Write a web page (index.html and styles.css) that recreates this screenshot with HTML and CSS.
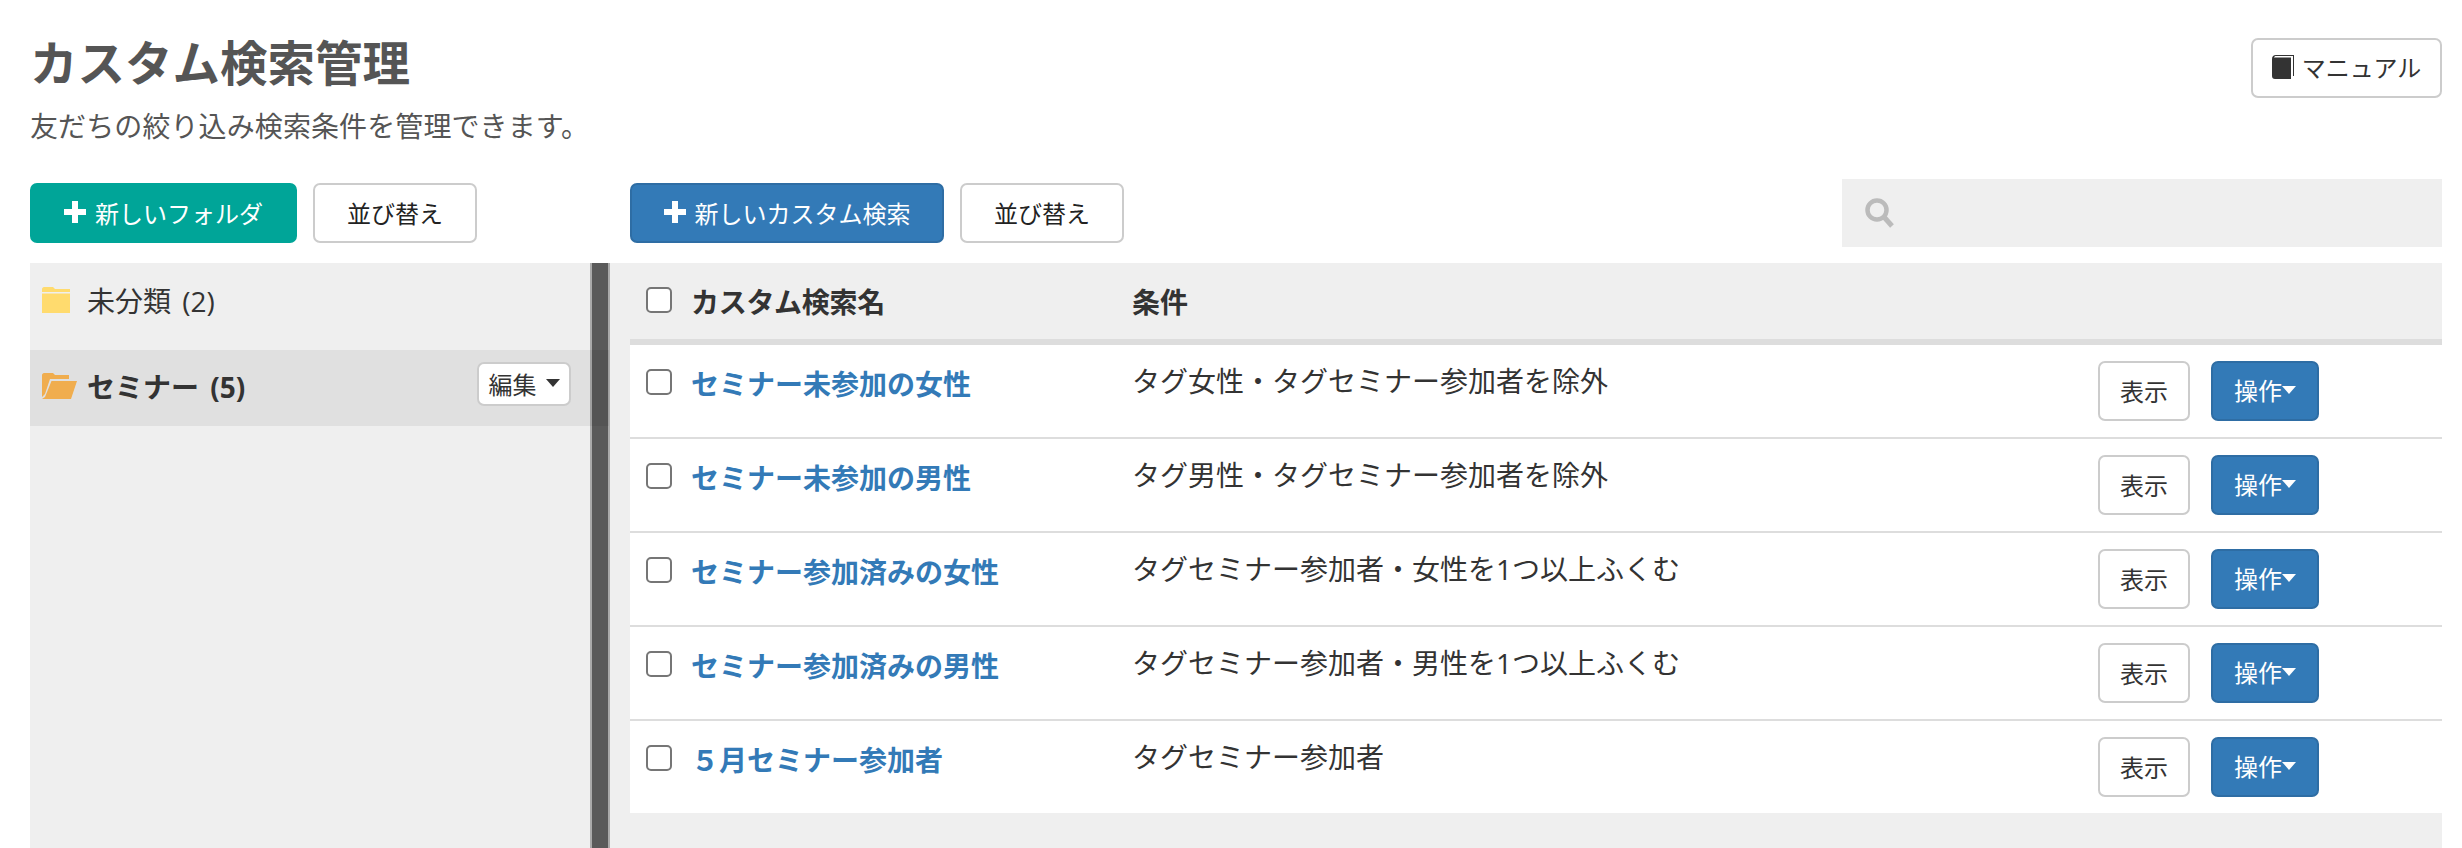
FILE: index.html
```html
<!DOCTYPE html>
<html lang="ja">
<head>
  <meta charset="UTF-8">
  <title>カスタム検索管理</title>
  <link rel="stylesheet" href="styles.css">
</head>
<body>
  <header class="page-header">
    <div>
      <h1>カスタム検索管理</h1>
      <p>友だちの絞り込み検索条件を管理できます。</p>
    </div>
    <button class="btn btn-manual">
      <svg class="icon-book" viewBox="0 0 22 24"><path d="M0 4C0 1.500 1.500 0 4 0h18v21h-1V1H4C3 1 2.300 1.500 2 2.500h17V24H3c-2 0-3-1-3-3z" fill="#333"/></svg>
      マニュアル
    </button>
  </header>

  <div class="toolbar">
    <div class="toolbar-left">
      <button class="btn btn-green btn-wide"><svg class="icon-plus" viewBox="0 0 22 22"><path d="M8 0h6v8h8v6h-8v8H8v-8H0V8h8z" fill="#fff"/></svg>新しいフォルダ</button>
      <button class="btn btn-wide">並び替え</button>
    </div>
    <div class="toolbar-right">
      <button class="btn btn-blue btn-wide btn-new-search"><svg class="icon-plus" viewBox="0 0 22 22"><path d="M8 0h6v8h8v6h-8v8H8v-8H0V8h8z" fill="#fff"/></svg>新しいカスタム検索</button>
      <button class="btn btn-wide">並び替え</button>
      <div class="search">
        <svg class="icon-search" viewBox="0 0 30 30"><circle cx="12" cy="12" r="9.500" fill="none" stroke="#bbb" stroke-width="4.500"/><path d="M19 19l8 9" fill="none" stroke="#bbb" stroke-width="5"/></svg>
      </div>
    </div>
  </div>

  <main class="panels">
    <aside class="folders">
      <div class="folder">
        <svg class="icon-folder" viewBox="0 0 28 26"><path d="M2 0h9l2 2h15v3H0V2c0-1 1-2 2-2z" fill="#ffdb6e"/><path d="M0 6.500h28V26H0z" fill="#ffdb6e"/></svg>
        <span>未分類 (2)</span>
      </div>
      <div class="folder folder-active">
        <svg class="icon-folder-open" viewBox="0 0 35 26"><path d="M2 0h9l2 2h14v4H8L3 21 0 24V2C0 1 1 0 2 0z" fill="#f0ad4e"/><path d="M9.500 8H35l-6 18H0L3 24z" fill="#f0ad4e"/></svg>
        <span class="folder-name">セミナー (5)</span>
        <button class="btn btn-edit">編集<i class="caret caret-dark"></i></button>
      </div>
    </aside>

    <div class="divider"></div>

    <section class="content">
      <div class="row row-head">
        <input type="checkbox">
        <div class="cell-name">カスタム検索名</div>
        <div class="cell-cond">条件</div>
      </div>

      <div class="row">
        <input type="checkbox">
        <a class="cell-name" href="#">セミナー未参加の女性</a>
        <div class="cell-cond">タグ女性・タグセミナー参加者を除外</div>
        <div class="cell-actions">
          <button class="btn btn-show">表示</button>
          <button class="btn btn-blue btn-ops">操作<i class="caret"></i></button>
        </div>
      </div>
      <div class="row">
        <input type="checkbox">
        <a class="cell-name" href="#">セミナー未参加の男性</a>
        <div class="cell-cond">タグ男性・タグセミナー参加者を除外</div>
        <div class="cell-actions">
          <button class="btn btn-show">表示</button>
          <button class="btn btn-blue btn-ops">操作<i class="caret"></i></button>
        </div>
      </div>
      <div class="row">
        <input type="checkbox">
        <a class="cell-name" href="#">セミナー参加済みの女性</a>
        <div class="cell-cond">タグセミナー参加者・女性を1つ以上ふくむ</div>
        <div class="cell-actions">
          <button class="btn btn-show">表示</button>
          <button class="btn btn-blue btn-ops">操作<i class="caret"></i></button>
        </div>
      </div>
      <div class="row">
        <input type="checkbox">
        <a class="cell-name" href="#">セミナー参加済みの男性</a>
        <div class="cell-cond">タグセミナー参加者・男性を1つ以上ふくむ</div>
        <div class="cell-actions">
          <button class="btn btn-show">表示</button>
          <button class="btn btn-blue btn-ops">操作<i class="caret"></i></button>
        </div>
      </div>
      <div class="row row-last">
        <input type="checkbox">
        <a class="cell-name" href="#">５月セミナー参加者</a>
        <div class="cell-cond">タグセミナー参加者</div>
        <div class="cell-actions">
          <button class="btn btn-show">表示</button>
          <button class="btn btn-blue btn-ops">操作<i class="caret"></i></button>
        </div>
      </div>
    </section>
  </main>
</body>
</html>
```

FILE: styles.css
```css
html, body {
  height: 100%;
}
body {
  margin: 0;
  padding: 0 20px 0 30px;
  box-sizing: border-box;
  display: flex;
  flex-direction: column;
  overflow: hidden;
  background-color: #fff;
  color: #333;
  font-family: "Open Sans", "Noto Sans CJK JP", sans-serif;
  font-size: 28px;
}
.page-header {
  display: flex;
  justify-content: space-between;
  align-items: flex-start;
  height: 179px;
}
.page-header h1 {
  margin: 28px 0 0;
  font-size: 47.500px;
  line-height: 70px;
  color: #555;
}
.page-header p {
  margin: 8px 0 0;
  font-size: 28px;
  line-height: 40px;
  letter-spacing: 0.100px;
  color: #555;
}
.btn {
  box-sizing: border-box;
  display: inline-flex;
  align-items: center;
  justify-content: center;
  height: 60px;
  padding-bottom: 2px;
  background-color: #fff;
  border: 2px solid #ccc;
  border-radius: 7px;
  color: #222;
  font-family: inherit;
  font-size: 24px;
  white-space: nowrap;
}
.btn-wide {
  padding: 0 32px 2px;
}
.btn-new-search {
  padding: 0 31.500px 2px;
}
.btn-green {
  background-color: #00a598;
  border-color: #00a598;
  color: #fff;
}
.btn-blue {
  background-color: #337ab7;
  border-color: #2e6da4;
  color: #fff;
}
.btn-manual {
  width: 191px;
  margin-top: 38px;
  padding-bottom: 4px;
  color: #333;
}
.icon-book {
  width: 22px;
  height: 24px;
  margin-right: 8px;
}
.icon-plus {
  width: 22px;
  height: 22px;
  margin-right: 9px;
}
.toolbar {
  display: flex;
  height: 68px;
  margin-bottom: 16px;
}
.toolbar-left {
  display: flex;
  align-items: center;
  gap: 16px;
  width: 600px;
}
.toolbar-right {
  display: flex;
  align-items: center;
  gap: 16px;
  flex: 1;
}
.search {
  display: flex;
  align-items: center;
  width: 600px;
  height: 68px;
  margin-left: auto;
  padding-left: 23px;
  box-sizing: border-box;
  background-color: #efefef;
}
.icon-search {
  width: 30px;
  height: 30px;
}
.panels {
  display: flex;
  flex: 1;
  min-height: 0;
}
.folders {
  width: 560px;
  background-color: #efefef;
}
.folder {
  display: flex;
  align-items: center;
  height: 74px;
  padding-left: 12px;
}
.folder span {
  margin-left: 17px;
  word-spacing: 4px;
}
.icon-folder {
  width: 28px;
  height: 26px;
}
.icon-folder-open {
  width: 35px;
  height: 26px;
}
.folder-active {
  position: relative;
  z-index: 1;
  box-sizing: border-box;
  height: 76px;
  margin-top: 13px;
  margin-right: -19px;
  padding-right: 38px;
  padding-bottom: 4px;
  background-color: rgba(0, 0, 0, 0.06);
  font-weight: bold;
}
.folder-active span {
  margin-left: 10px;
}
.folder-name {
  flex: 1;
}
.btn-edit {
  width: 94px;
  height: 44px;
  margin-bottom: 5px;
  color: #333;
}
.caret {
  width: 0;
  height: 0;
  margin-left: 9px;
  border-top: 8px solid #fff;
  border-left: 7.500px solid transparent;
  border-right: 7.500px solid transparent;
}
.caret-dark {
  border-top-color: #333;
}
.divider {
  box-sizing: border-box;
  width: 20px;
  background-color: #5a5a5a;
  border-left: 2px solid #aaa;
  border-right: 2px solid #aaa;
}
.content {
  flex: 1;
  padding-left: 20px;
  background-color: #efefef;
}
.row {
  position: relative;
  display: flex;
  align-items: flex-start;
  box-sizing: border-box;
  height: 94px;
  padding: 24px 0 0 16px;
  background-color: #fff;
  border-bottom: 2px solid #ddd;
}
.row input {
  flex: none;
  appearance: none;
  box-sizing: border-box;
  width: 26px;
  height: 26px;
  margin: 0;
  background-color: #fff;
  border: 2px solid #767676;
  border-radius: 5px;
}
.row-head {
  height: 82px;
  background-color: #efefef;
  border-bottom: 6px solid #ddd;
}
.row-last {
  height: 92px;
  border-bottom: 0;
}
.cell-name {
  width: 441px;
  margin-left: 19px;
  margin-top: -3px;
  font-weight: bold;
  line-height: 36px;
  color: #337ab7;
  text-decoration: none;
}
.row-head .cell-name {
  margin-top: -3px;
  letter-spacing: -0.300px;
  color: #333;
}
.cell-cond {
  line-height: 36px;
  margin-top: -6px;
}
.row-head .cell-cond {
  margin-top: -3px;
  font-weight: bold;
}
.cell-actions {
  display: flex;
  gap: 21px;
  margin-left: auto;
  margin-top: -8px;
  margin-right: 123px;
}
.btn-show {
  width: 92px;
  color: #333;
}
.btn-ops {
  width: 108px;
  padding-bottom: 4px;
}
.btn-ops .caret {
  margin-left: 0;
}
```
